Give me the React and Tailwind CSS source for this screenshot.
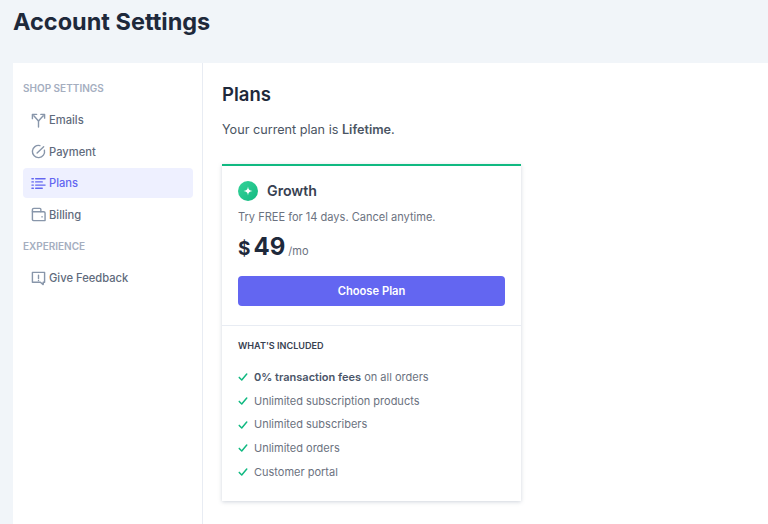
import React from "react";

const Icon = ({ children, className = "text-[#8896aa]" }) => (
  <svg viewBox="0 0 16 16" fill="none" stroke="currentColor" strokeWidth="1.5" strokeLinecap="round" strokeLinejoin="round" className={`w-[15px] h-[15px] shrink-0 ${className}`}>
    {children}
  </svg>
);

const items = [
  { label: "Emails", icon: <><path d="M8 15V8.5L3 3" /><path d="M1.5 6V1.5H6" /><path d="M8 8.5L13 3" /><path d="M10.5 1.5H14.5V5.5" /></> },
  { label: "Payment", icon: <><path d="M9.5 1.7A6.5 6.5 0 1 0 14.3 6.5" /><path d="M6.5 9.5L13.5 3" /></> },
  { label: "Plans", active: true, icon: <><path d="M1 3h1.5M1 6.3h1.5M1 9.7h1.5M1 13h1.5" /><path d="M5 3h10M5 6.3h7M5 9.7h10M5 13h7" /></> },
  { label: "Billing", icon: <><path d="M1.5 13.5V3a1.5 1.5 0 0 1 1.5-1.5h6.5a1 1 0 0 1 1 1V5h3a1.5 1.5 0 0 1 1.5 1.5v8h-12a1.5 1.5 0 0 1-1.5-1z" /><path d="M1.5 5H10.5" /><path d="M11.5 10.5h.6" /></> },
];

const features = [
  <><b className="font-semibold text-[#4a5568]">0% transaction fees</b> on all orders</>,
  "Unlimited subscription products",
  "Unlimited subscribers",
  "Unlimited orders",
  "Customer portal",
];

function NavItem({ label, icon, active }) {
  return (
    <div className={`h-[30px] flex items-center gap-[3px] pl-2 rounded text-[11.2px] font-medium ${active ? "bg-[#eef0ff] text-[#6366f1]" : "text-[#5f6b7c]"}`}>
      <Icon className={active ? "text-[#6366f1]" : "text-[#8896aa]"}>{icon}</Icon>
      <span className="pt-px">{label}</span>
    </div>
  );
}

export default function App() {
  return (
    <div className="w-[768px] h-[524px] overflow-hidden bg-[#f1f5f9] flex flex-col font-['Inter',sans-serif]">
      <h1 className="h-[63px] pl-[13px] pt-[7px] text-[23.5px] leading-[30px] font-bold text-[#1e293b]">Account Settings</h1>
      <div className="flex-1 ml-[13px] bg-white flex">
        <aside className="w-[190px] shrink-0 border-r border-[#e8ecf3] pl-[10px] pr-[9px] pt-[19px]">
          <div className="text-[10px] leading-[12px] font-semibold text-[#a5aebf] mb-[11px]">SHOP SETTINGS</div>
          <div className="flex flex-col gap-[1.6px]">
            {items.map((i) => <NavItem key={i.label} {...i} />)}
          </div>
          <div className="text-[10px] leading-[12px] font-semibold text-[#a5aebf] mt-[10px] mb-[11.5px]">EXPERIENCE</div>
          <NavItem label="Give Feedback" icon={<><path d="M1.5 1.5h13v10.5h-1.5v2.5l-3-2.5h-8.5z" /><path d="M8 4.5v3.5M8 10v.3" /></>} />
        </aside>
        <main className="flex-1 pl-[19px] pt-[19px]">
          <h2 className="text-[18.5px] leading-[24px] font-semibold text-[#1e293b]">Plans</h2>
          <p className="mt-[14px] text-[12.65px] leading-[20px] text-[#4b5563]">Your current plan is <b className="font-semibold">Lifetime</b>.</p>
          <div className="mt-[24px] w-[299px] h-[337px] bg-white border-t-2 border-t-[#10b981] shadow-[0_1px_4px_rgba(100,116,139,0.3)]">
            <div className="px-4 pt-[15px] h-[160px] border-b border-[#e8ecf3]">
              <div className="flex items-center gap-[9px]">
                <div className="w-5 h-5 rounded-full bg-gradient-to-br from-[#34d399] to-[#10b981] flex items-center justify-center">
                  <svg viewBox="0 0 10 10" className="w-[10px] h-[10px]"><path d="M5 0.5C5.3 3.5 6.5 4.7 9.5 5 6.5 5.3 5.3 6.5 5 9.5 4.7 6.5 3.5 5.3 0.5 5 3.5 4.7 4.7 3.5 5 0.5z" fill="#fff" /></svg>
                </div>
                <span className="text-[14.2px] leading-5 font-semibold text-[#374151]">Growth</span>
              </div>
              <p className="mt-[8px] text-[11.05px] leading-[16px] text-[#6b7280]">Try FREE for 14 days. Cancel anytime.</p>
              <div className="mt-[6px] h-[32px] flex items-baseline text-[#1e293b] font-bold">
                <span className="text-[19px] mr-[3px]">$</span>
                <span className="text-2xl">49</span>
                <span className="ml-[3px] text-[11px] font-normal text-[#6b7280]">/mo</span>
              </div>
              <button className="mt-[13px] w-full h-[30px] rounded bg-[#6366f1] text-white text-[11.2px] font-semibold">Choose Plan</button>
            </div>
            <div className="px-4 pt-[13px]">
              <div className="text-[9.1px] leading-[13px] font-semibold text-[#374151]">WHAT'S INCLUDED</div>
              <ul className="mt-[15px] flex flex-col gap-[3.8px]">
                {features.map((f, n) => (
                  <li key={n} className="h-5 flex items-center gap-[6px] text-[11px] text-[#6b7280]">
                    <svg viewBox="0 0 12 12" fill="none" stroke="#10b981" strokeWidth="1.8" strokeLinecap="round" strokeLinejoin="round" className="w-[10px] h-[10px] shrink-0"><path d="M1.5 6.5l3 3 6-7" /></svg>
                    <span>{f}</span>
                  </li>
                ))}
              </ul>
            </div>
          </div>
        </main>
      </div>
    </div>
  );
}
